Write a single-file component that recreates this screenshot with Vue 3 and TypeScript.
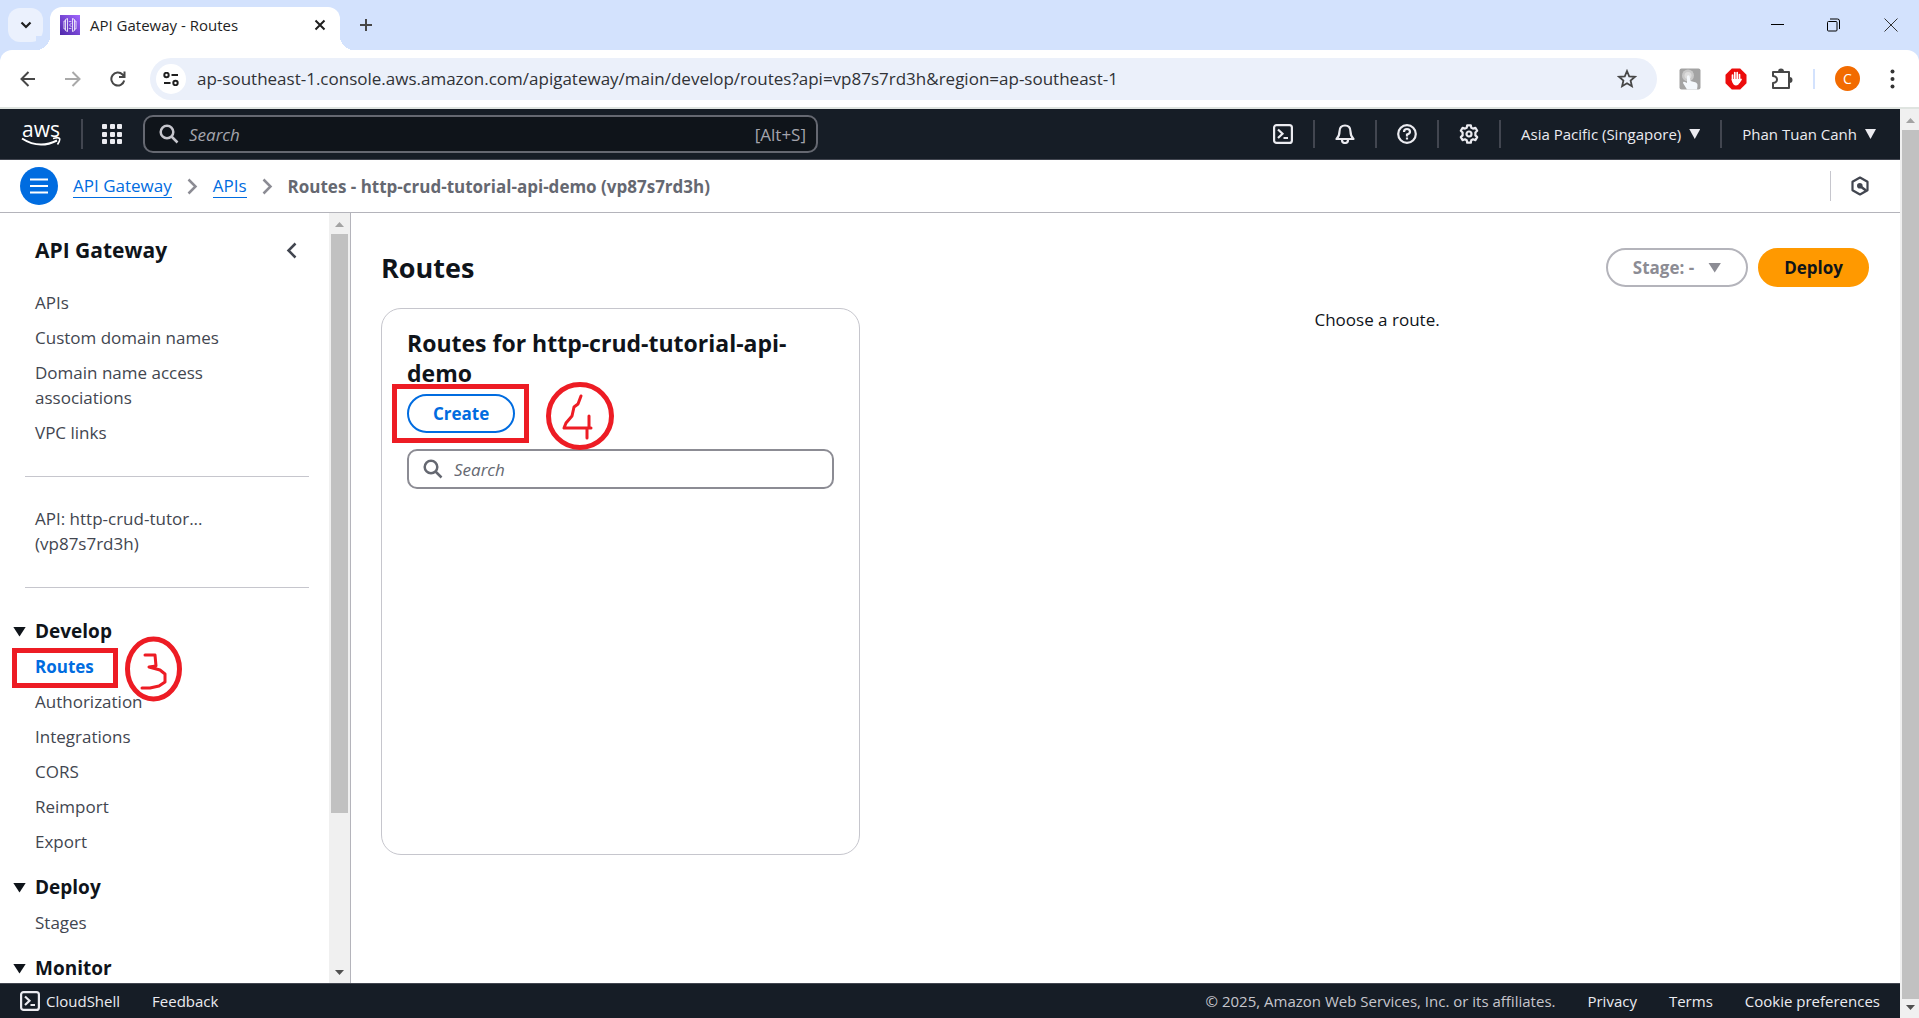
<script setup lang="ts">
import { ref } from 'vue'

interface NavSection {
  title: string
  items: string[]
}

const address = ref('ap-southeast-1.console.aws.amazon.com/apigateway/main/develop/routes?api=vp87s7rd3h&region=ap-southeast-1')
const globalQuery = ref('')
const routeQuery = ref('')

const topLinks = ['APIs', 'Custom domain names', 'Domain name access associations', 'VPC links']

const sections: NavSection[] = [
  { title: 'Develop', items: ['Routes', 'Authorization', 'Integrations', 'CORS', 'Reimport', 'Export'] },
  { title: 'Deploy', items: ['Stages'] },
  { title: 'Monitor', items: [] },
]

const activeItem = ref('Routes')
const gridDots = [0, 8, 15]
</script>

<template>
  <div class="window">
    <div class="tabstrip">
      <button class="tab-search" aria-label="Search tabs">
        <svg width="12" height="8" viewBox="0 0 12 8"><path d="M1.500 1.500 6 6l4.500-4.500" fill="none" stroke="#1f1f1f" stroke-width="2.200" /></svg>
      </button>
      <div class="tab">
        <svg class="favicon" width="20" height="20" viewBox="0 0 20 20">
          <defs>
            <linearGradient id="fav" x1="0" y1="1" x2="1" y2="0">
              <stop offset="0" stop-color="#4d27a8" />
              <stop offset="1" stop-color="#a166ff" />
            </linearGradient>
          </defs>
          <rect width="20" height="20" fill="url(#fav)" />
          <g fill="none" stroke="#fff" stroke-width=".8">
            <path d="M7.500 3.500 5.500 4.500v11l2 1zM12.500 3.500 14.500 4.500v11l-2 1zM5.500 6H4v8h1.500M14.500 6H16v8h-1.500" />
            <path d="M11.500 8 9.500 10l2 2M8.800 6.500h2.500M8.800 13.500h2.500" stroke-opacity=".8" />
          </g>
        </svg>
        <span class="tab-title">API Gateway - Routes</span>
        <button class="plain" aria-label="Close tab">
          <svg width="12" height="12" viewBox="0 0 12 12"><path d="m1.500 1.500 9 9m0-9-9 9" stroke="#1f1f1f" stroke-width="2" /></svg>
        </button>
      </div>
      <button class="plain new-tab" aria-label="New tab">
        <svg width="14" height="14" viewBox="0 0 14 14"><path d="M7 1v12M1 7h12" stroke="#474747" stroke-width="2" /></svg>
      </button>
      <div class="win-controls">
        <button class="plain" aria-label="Minimize"><svg width="14" height="14" viewBox="0 0 14 14"><path d="M1 6.500h13" stroke="#000" /></svg></button>
        <button class="plain" aria-label="Restore"><svg width="14" height="14" viewBox="0 0 14 14" fill="none" stroke="#000"><rect x=".5" y="3.500" width="9.500" height="9.500" rx="1" /><path d="M3 1h7.500q2 0 2 2v8" /></svg></button>
        <button class="plain" aria-label="Close"><svg width="14" height="14" viewBox="0 0 14 14"><path d="m.5.5 13 13m0-13-13 13" stroke="#333" /></svg></button>
      </div>
    </div>

    <div class="toolbar">
      <div class="nav-buttons">
        <button class="plain" aria-label="Back">
          <svg width="16" height="16" viewBox="0 0 16 16" fill="none" stroke="#474747" stroke-width="2"><path d="M15 8H2M8.500 1 1.500 8l7 7" /></svg>
        </button>
        <button class="plain" aria-label="Forward">
          <svg width="16" height="16" viewBox="0 0 16 16" fill="none" stroke="#a9a9a9" stroke-width="2"><path d="M0 8H14M7.500 1l7 7-7 7" /></svg>
        </button>
        <button class="plain" aria-label="Reload">
          <svg width="16" height="16" viewBox="0 0 16 16" fill="none" stroke="#474747" stroke-width="2"><path d="M14.200 9.500A6.500 6.500 0 1 1 12.500 3.500L14 5.500M14.500.5v5.500H9" /></svg>
        </button>
      </div>
      <div class="omnibox">
        <button class="site-info" aria-label="View site information">
          <svg width="16" height="14" viewBox="0 0 16 14" fill="none" stroke="#1f1f1f" stroke-width="2"><circle cx="3.500" cy="3" r="2.200" /><path d="M8.500 3H15M1 11h6.500" /><circle cx="12.500" cy="11" r="2.200" /></svg>
        </button>
        <input v-model="address" class="url" type="text" aria-label="Address bar" spellcheck="false" />
        <button class="plain" aria-label="Bookmark this tab">
          <svg width="20" height="19" viewBox="0 0 20 19"><path d="m10 2 2.200 5.300 5.800.5-4.400 3.800 1.300 5.600L10 14.200l-4.900 3 1.300-5.600L2 7.800l5.800-.5z" fill="none" stroke="#474747" stroke-width="1.800" /></svg>
        </button>
      </div>
      <div class="extensions">
        <button class="plain" aria-label="Click extension">
          <svg width="22" height="22" viewBox="0 0 22 22"><rect x=".5" y=".5" width="21" height="21" rx="2" fill="#a3a3a3" /><circle cx="9" cy="7.500" r="6" fill="#c9c9c9" /><circle cx="9" cy="7.500" r="3.500" fill="#ddd" /><path d="M8 8q1.500-1.500 2.500 0l1 5 5.500 1.500q2 1 1.500 3.500l-.5 3.500H8L4 15q0-2 2-1l2 1z" fill="#f4f8fc" /></svg>
        </button>
        <button class="plain" aria-label="AdBlock">
          <svg width="22" height="22" viewBox="0 0 22 22"><path d="M6.800.5h8.400l6.300 6.300v8.400l-6.300 6.300H6.800L.5 15.200V6.800z" fill="#ec0c0c" /><path d="M7.500 7v5M9.800 4.500v8M12.200 4.500v8M14.500 6.500V13M16 11.500l-2 3" stroke="#fff" stroke-width="1.700" stroke-linecap="round" /><path d="M6.700 11h8.600v1.500l-1.800 4q-2.700 2-4.900 0-1.900-2-1.900-5" fill="#fff" /></svg>
        </button>
        <button class="plain" aria-label="Extensions">
          <svg width="22" height="22" viewBox="0 0 22 22"><path d="M2 4h16v16H2v-5q4-.5 4-3.500T2 8z" fill="none" stroke="#474747" stroke-width="2" stroke-linejoin="round" /><path d="M7 3.500a3 3 0 0 1 6 0zM18.500 9a3 3 0 0 1 0 6z" fill="#474747" /></svg>
        </button>
        <span class="ext-divider"></span>
        <button class="avatar" aria-label="Profile">C</button>
        <button class="plain menu-dots" aria-label="Menu">
          <svg width="5" height="20" viewBox="0 0 5 20" fill="#333"><circle cx="2.500" cy="2.500" r="2" /><circle cx="2.500" cy="10" r="2" /><circle cx="2.500" cy="17.500" r="2" /></svg>
        </button>
      </div>
    </div>

    <div class="viewport">
      <div class="page">
        <header class="aws-header">
          <a class="aws-logo" href="#" aria-label="AWS home">
            <span>aws</span>
            <svg width="40" height="10" viewBox="0 0 40 10" fill="none" stroke="#fff"><path d="M1 1.500Q18 12.500 36 3.500" stroke-width="2" /><path d="M32 1.500q5.500-1.500 6.500 0t-2 6" stroke-width="1.600" /></svg>
          </a>
          <span class="divider"></span>
          <button class="plain services" aria-label="Services">
            <svg width="21" height="21" viewBox="0 0 21 21" fill="#ebebf0">
              <template v-for="y in gridDots" :key="y">
                <rect v-for="x in gridDots" :key="x" :x="x" :y="y" width="5" height="5" rx="1" />
              </template>
            </svg>
          </button>
          <label class="header-search">
            <svg width="20" height="20" viewBox="0 0 20 20" fill="none" stroke="#c6c6cd" stroke-width="2.500"><circle cx="8" cy="8" r="6.300" /><path d="m12.500 12.500 6 6" /></svg>
            <input v-model="globalQuery" type="search" placeholder="Search" aria-label="Search" />
            <span class="hint">[Alt+S]</span>
          </label>
          <div class="header-tools">
            <button class="tool" aria-label="CloudShell">
              <svg width="20" height="20" viewBox="0 0 20 20" fill="none" stroke="#ebebf0" stroke-width="2.200"><rect x="1.100" y="1.100" width="17.800" height="17.800" rx="2.500" /><path d="m5 5.500 4.500 4.300L5 14M10.500 14H15" /></svg>
            </button>
            <button class="tool" aria-label="Notifications">
              <svg width="20" height="20" viewBox="0 0 20 20" fill="none" stroke="#ebebf0" stroke-width="2.200"><path d="M1.500 15h17q-3-3-3-7.500C15.500 3.500 13.500 1.500 10 1.500S4.500 3.500 4.500 7.500Q4.500 12 1.500 15z" stroke-linejoin="round" /><path d="M7 16q0 3 3 3t3-3" /></svg>
            </button>
            <button class="tool" aria-label="Support">
              <svg width="20" height="20" viewBox="0 0 20 20" fill="none" stroke="#ebebf0" stroke-width="2.200"><circle cx="10" cy="10" r="8.800" /><path d="M7 8q0-3 3-3t3 2.700Q13 9.500 10 10.500V12.500" /><path d="M10 13.500v2" /></svg>
            </button>
            <button class="tool" aria-label="Settings">
              <svg width="20" height="20" viewBox="0 0 20 20" fill="none" stroke="#ebebf0" stroke-width="2.200" stroke-linejoin="round"><path d="M8.200 1.300h3.600l.5 2.400 1.700.9 2.400-.8 1.800 3-1.800 1.700v2.900l1.800 1.700-1.800 3-2.400-.8-1.700 1-.5 2.400H8.200l-.5-2.400-1.700-1-2.400.8-1.800-3 1.800-1.700V8.500L1.800 6.800l1.800-3 2.400.8 1.700-.9z" /><circle cx="10" cy="10" r="2.500" /></svg>
            </button>
            <button class="tool text">Asia Pacific (Singapore) <span class="caret"></span></button>
            <button class="tool text">Phan Tuan Canh <span class="caret"></span></button>
          </div>
        </header>

        <div class="crumb-bar">
          <button class="menu-toggle" aria-label="Toggle navigation">
            <svg width="18" height="16" viewBox="0 0 18 16"><path d="M0 1.500h18M0 8h18M0 14.500h18" stroke="#fff" stroke-width="2.200" /></svg>
          </button>
          <nav class="crumbs" aria-label="Breadcrumbs">
            <a href="#">API Gateway</a>
            <svg width="11" height="17" viewBox="0 0 11 17"><path d="m1.500 1.500 7 7-7 7" fill="none" stroke="#8c8c94" stroke-width="2.500" /></svg>
            <a href="#">APIs</a>
            <svg width="11" height="17" viewBox="0 0 11 17"><path d="m1.500 1.500 7 7-7 7" fill="none" stroke="#8c8c94" stroke-width="2.500" /></svg>
            <strong>Routes - http-crud-tutorial-api-demo (vp87s7rd3h)</strong>
          </nav>
          <button class="assist" aria-label="Assistant">
            <svg width="20" height="20" viewBox="0 0 20 20"><path d="m10 1.500 7.500 4.300v8.400L10 18.500l-7.500-4.300V5.800z" fill="none" stroke="#424650" stroke-width="2.200" stroke-linejoin="round" /><circle cx="9.800" cy="9.800" r="2.800" fill="#424650" /><path d="m10 10 6 4.500" stroke="#424650" stroke-width="2.500" /></svg>
          </button>
        </div>

        <div class="body">
          <aside class="sidebar">
            <div class="side-content">
              <div class="side-head">
                <h2>API Gateway</h2>
                <button class="plain" aria-label="Close navigation">
                  <svg width="11" height="17" viewBox="0 0 11 17"><path d="m9.500 1.500-7 7 7 7" fill="none" stroke="#424650" stroke-width="2.500" /></svg>
                </button>
              </div>
              <ul class="links">
                <li v-for="link in topLinks" :key="link"><a href="#">{{ link }}</a></li>
              </ul>
              <hr />
              <p class="api-name">API: http-crud-tutor...<br />(vp87s7rd3h)</p>
              <hr />
              <section v-for="section in sections" :key="section.title" class="section">
                <h3><button class="expander"><span class="caret"></span>{{ section.title }}</button></h3>
                <ul class="links">
                  <li v-for="item in section.items" :key="item">
                    <a href="#" :class="{ active: item === activeItem }">{{ item }}</a>
                    <template v-if="item === activeItem">
                      <span class="mark-box mark-routes"></span>
                      <svg class="mark-three" width="58" height="66" viewBox="0 0 58 66" fill="none" stroke="#ed1c24" role="img" aria-label="Step three">
                        <ellipse cx="28.500" cy="33" rx="26" ry="30" stroke-width="5" />
                        <path d="M20 19h10l1 11-7 1 11 3 5 4v8l-6 4-9 2h-8" stroke-width="3" stroke-linecap="round" stroke-linejoin="round" />
                      </svg>
                    </template>
                  </li>
                </ul>
              </section>
            </div>
            <div class="scrollbar">
              <span class="arrow up"></span>
              <span class="thumb side-thumb"></span>
              <span class="arrow down"></span>
            </div>
          </aside>

          <main class="main">
            <div class="main-head">
              <h1>Routes</h1>
              <div class="actions">
                <button class="btn stage" disabled>Stage: - <span class="caret"></span></button>
                <button class="btn primary">Deploy</button>
              </div>
            </div>
            <div class="columns">
              <section class="card">
                <h2>Routes for http-crud-tutorial-api-demo</h2>
                <div class="create-row">
                  <button class="btn normal">Create</button>
                  <span class="mark-box mark-create"></span>
                  <svg class="mark-four" width="68" height="68" viewBox="0 0 68 68" fill="none" stroke="#ed1c24" role="img" aria-label="Step four">
                    <circle cx="34" cy="34" r="31.500" stroke-width="5" />
                    <path d="m35 14-3 8-4 3-2 9-6 7-2 5h27M43 34v11l-2 2v9" stroke-width="3" stroke-linecap="round" stroke-linejoin="round" />
                  </svg>
                </div>
                <label class="route-search">
                  <svg width="20" height="20" viewBox="0 0 20 20" fill="none" stroke="#656871" stroke-width="2.500"><circle cx="8" cy="8" r="6.300" /><path d="m12.500 12.500 6 6" /></svg>
                  <input v-model="routeQuery" type="search" placeholder="Search" aria-label="Search routes" />
                </label>
              </section>
              <p class="empty">Choose a route.</p>
            </div>
          </main>
        </div>

        <footer class="footer">
          <button class="cloudshell">
            <svg width="20" height="20" viewBox="0 0 20 20" fill="none" stroke="#ebebf0" stroke-width="2.200"><rect x="1.100" y="1.100" width="17.800" height="17.800" rx="2.500" /><path d="m5 5.500 4.500 4.300L5 14M10.500 14H15" /></svg>
            CloudShell
          </button>
          <a href="#">Feedback</a>
          <span class="copyright">© 2025, Amazon Web Services, Inc. or its affiliates.</span>
          <a href="#">Privacy</a>
          <a href="#">Terms</a>
          <a href="#">Cookie preferences</a>
        </footer>
      </div>
      <div class="scrollbar">
        <span class="arrow up"></span>
        <span class="thumb"></span>
        <span class="arrow down"></span>
      </div>
    </div>
  </div>
</template>

<style>
body {
  margin: 0;
  background: #fff;
}
</style>

<style scoped>
* {
  box-sizing: border-box;
}

.window {
  display: flex;
  flex-direction: column;
  height: 100vh;
  overflow: hidden;
  font: 17px/25px "Open Sans", "Noto Sans", sans-serif;
  color: #0f141a;
  background: #d3e2fd;
}

h1, h2, h3, p, ul {
  margin: 0;
  padding: 0;
}

ul {
  list-style: none;
}

svg {
  display: block;
  flex: none;
}

button, input {
  font: inherit;
  color: inherit;
}

button {
  padding: 0;
  border: 0;
  background: none;
  white-space: nowrap;
}

input {
  min-width: 0;
  padding: 0;
  border: 0;
  outline: 0;
  background: none;
  appearance: none;
}

.plain {
  display: flex;
  align-items: center;
  justify-content: center;
}

.caret {
  flex: none;
  width: 13px;
  height: 10px;
  background: currentColor;
  clip-path: polygon(0 0, 100% 0, 50% 100%);
}

/* Browser chrome */
.tabstrip {
  display: flex;
  align-items: flex-end;
  flex: none;
  height: 50px;
  padding: 0 21px 0 8px;
}

.tab-search {
  display: grid;
  place-items: center;
  width: 35px;
  height: 34px;
  margin-bottom: 8px;
  border-radius: 12px;
  background: #ebf1fd;
}

.tab {
  position: relative;
  display: flex;
  align-items: center;
  gap: 10px;
  width: 290px;
  height: 43px;
  margin-left: 7px;
  padding: 0 14px 7px 10px;
  border-radius: 12px 12px 0 0;
  background: #fff;
}

.tab::before, .tab::after {
  content: "";
  position: absolute;
  bottom: 0;
  width: 14px;
  height: 14px;
}

.tab::before {
  right: 100%;
  background: radial-gradient(circle at 0 0, #d3e2fd 14px, #fff 14px);
}

.tab::after {
  left: 100%;
  background: radial-gradient(circle at 100% 0, #d3e2fd 14px, #fff 14px);
}

.tab-title {
  flex: 1;
  font-size: 15px;
  color: #1f1f1f;
}

.new-tab {
  margin: 0 0 18px 19px;
}

.win-controls {
  display: flex;
  gap: 43px;
  margin: 0 0 18px auto;
}

.toolbar {
  display: flex;
  align-items: center;
  flex: none;
  height: 59px;
  padding: 0 24px 0 20px;
  border-bottom: 2px solid #dfe4e0;
  border-radius: 12px 12px 0 0;
  background: #fff;
}

.nav-buttons {
  display: flex;
  gap: 29px;
}

.omnibox {
  display: flex;
  align-items: center;
  flex: 1;
  gap: 11px;
  height: 42px;
  margin-left: 24px;
  padding: 0 20px 0 6px;
  border-radius: 21px;
  background: #ebf0fa;
}

.site-info {
  display: grid;
  place-items: center;
  width: 30px;
  height: 30px;
  border-radius: 50%;
  background: #fff;
}

.url {
  flex: 1;
  font-size: 17px;
  color: #303236;
}

.extensions {
  display: flex;
  align-items: center;
  gap: 24px;
  margin-left: 22px;
}

.ext-divider {
  width: 2px;
  height: 20px;
  margin: 0 -4px;
  background: #d3e2fd;
}

.avatar {
  width: 25px;
  height: 25px;
  margin-right: 6px;
  border-radius: 50%;
  background: #f26b00;
  color: #fff;
  font-size: 14px;
  line-height: 25px;
}

.viewport {
  display: flex;
  flex: 1;
  min-height: 0;
  background: #fff;
}

.page {
  display: flex;
  flex: 1;
  flex-direction: column;
  min-width: 0;
}

.scrollbar {
  display: flex;
  flex: none;
  flex-direction: column;
  justify-content: space-between;
  width: 19px;
  padding: 0 0 0 2px;
  background: #f0f0f0;
}

.thumb {
  flex: 1;
  width: 17px;
  background: #c1c1c1;
}

.arrow {
  height: 19px;
  width: 9px;
  margin: 1px 4px;
}

.arrow.up {
  background: #a3a3a3;
  clip-path: polygon(0 13px, 100% 13px, 50% 8px);
}

.arrow.down {
  height: 17px;
  background: #505050;
  clip-path: polygon(0 5px, 100% 5px, 50% 10px);
}

/* Console header */
.aws-header {
  display: flex;
  align-items: center;
  flex: none;
  height: 51px;
  padding: 0 24px 0 21px;
  border-bottom: 1px solid #424650;
  background: #161d26;
  color: #ebebf0;
}

.aws-logo {
  width: 40px;
  color: #fff;
  font-size: 21px;
  font-weight: 500;
  line-height: 16px;
  text-align: center;
  text-decoration: none;
}

.divider {
  width: 2px;
  height: 30px;
  margin: 0 19px 0 20px;
  background: #424650;
}

.header-search {
  display: flex;
  align-items: center;
  gap: 10px;
  width: 675px;
  height: 38px;
  margin-left: 20px;
  padding: 0 10px 0 14px;
  border: 2px solid #656871;
  border-radius: 10px;
  background: #0f141a;
}

.header-search input {
  flex: 1;
}

.header-search input::placeholder {
  color: #a4a4ad;
  font-style: italic;
}

.hint {
  color: #a4a4ad;
}

.header-tools {
  display: flex;
  margin-left: auto;
}

.tool {
  display: flex;
  align-items: center;
  gap: 8px;
  height: 28px;
  padding: 0 20px;
  border-left: 2px solid #424650;
  font-size: 15px;
}

.tool:first-child {
  border-left: 0;
}

.tool:last-child {
  padding-right: 0;
}

.tool .caret {
  width: 11px;
}

.crumb-bar {
  display: flex;
  align-items: center;
  flex: none;
  height: 53px;
  padding: 0 30px 0 20px;
  border-bottom: 1px solid #b4b4bb;
}

.menu-toggle {
  display: grid;
  place-items: center;
  width: 38px;
  height: 38px;
  border-radius: 50%;
  background: #006ce0;
}

.crumbs {
  display: flex;
  align-items: center;
  gap: 15px;
  margin-left: 15px;
}

.crumbs a {
  border-bottom: 1px solid #006ce0;
  color: #006ce0;
  line-height: 22px;
  text-decoration: none;
}

.crumbs strong {
  color: #656871;
  font-weight: 700;
}

.assist {
  display: grid;
  place-items: center end;
  width: 40px;
  height: 30px;
  margin-left: auto;
  border-left: 1px solid #c6c6cd;
}

.body {
  display: flex;
  flex: 1;
  min-height: 0;
}

/* Side navigation */
.sidebar {
  display: flex;
  flex: none;
  width: 351px;
  border-right: 1px solid #b4b4bb;
}

.sidebar .scrollbar {
  margin-right: auto;
  width: 21px;
}

.side-thumb {
  flex: 0 1 579px;
  margin-bottom: auto;
}

.side-content {
  width: 329px;
  padding: 22px 20px 0 35px;
  overflow: hidden;
}

.side-head {
  display: flex;
  align-items: center;
  justify-content: space-between;
  margin-bottom: 25px;
  padding-right: 12px;
}

.side-head h2 {
  font-size: 21px;
  line-height: 30px;
}

.links {
  display: flex;
  flex-direction: column;
  gap: 10px;
}

.links li {
  position: relative;
  max-width: 220px;
}

.links a {
  display: block;
  color: #424650;
  text-decoration: none;
}

.links a.active {
  color: #006ce0;
  font-weight: 700;
}

.api-name {
  color: #424650;
}

hr {
  height: 1px;
  margin: 31px 0 29px -10px;
  border: 0;
  background: #c6c6cd;
}

.section {
  padding-top: 2px;
  margin-bottom: 19px;
}

.section h3 {
  margin-bottom: 10px;
}

.expander {
  display: flex;
  align-items: center;
  gap: 9px;
  margin-left: -22px;
  font-size: 19px;
  font-weight: 700;
}

/* Hand-drawn step marks */
.mark-box {
  position: absolute;
  border: 5px solid #ed1c24;
  pointer-events: none;
}

.mark-routes {
  top: -6px;
  left: -23px;
  width: 106px;
  height: 40px;
}

.mark-three {
  position: absolute;
  z-index: 1;
  top: -18px;
  left: 90px;
}

.mark-create {
  top: -10px;
  left: -15px;
  width: 137px;
  height: 59px;
}

.mark-four {
  position: absolute;
  top: -12px;
  left: 139px;
}

/* Main area */
.main {
  flex: 1;
  min-width: 0;
  padding: 35px 31px 0 30px;
}

.main-head {
  display: flex;
  align-items: center;
  justify-content: space-between;
  height: 39px;
}

.main-head h1 {
  font-size: 27px;
  line-height: 36px;
}

.actions {
  display: flex;
  gap: 10px;
}

.btn {
  display: flex;
  align-items: center;
  gap: 14px;
  height: 39px;
  padding: 0 24px;
  border: 2px solid;
  border-radius: 20px;
  line-height: 24px;
  font-weight: 700;
}

.btn.stage {
  padding: 0 25px;
  border-color: #b4b4bb;
  color: #8c8c94;
}

.btn.primary {
  border-color: #ff9900;
  background: #ff9900;
}

.btn.normal {
  border-color: #006ce0;
  color: #006ce0;
}

.columns {
  display: flex;
  align-items: flex-start;
  gap: 25px;
  margin-top: 21px;
}

.card {
  flex: 0 0 32.2%;
  min-height: 547px;
  padding: 19px 25px;
  border: 1px solid #c6c6cd;
  border-radius: 20px;
}

.card h2 {
  font-size: 23px;
  line-height: 30px;
}

.create-row {
  position: relative;
  display: flex;
  margin: 6px 0 16px;
}

.route-search {
  display: flex;
  align-items: center;
  gap: 11px;
  height: 40px;
  padding: 0 14px;
  border: 2px solid #8c8c94;
  border-radius: 10px;
}

.route-search input {
  flex: 1;
}

.route-search input::placeholder {
  color: #656871;
  font-style: italic;
}

.empty {
  flex: 1;
  line-height: 23px;
  text-align: center;
}

/* Footer */
.footer {
  display: flex;
  align-items: center;
  flex: none;
  gap: 32px;
  height: 35px;
  padding: 0 20px;
  border-top: 1px solid #424650;
  background: #161d26;
  color: #ebebf0;
  font-size: 15px;
}

.footer a {
  color: inherit;
  text-decoration: none;
}

.cloudshell {
  display: flex;
  align-items: center;
  gap: 6px;
}

.copyright {
  margin-left: auto;
  color: #c6c6cd;
}
</style>
